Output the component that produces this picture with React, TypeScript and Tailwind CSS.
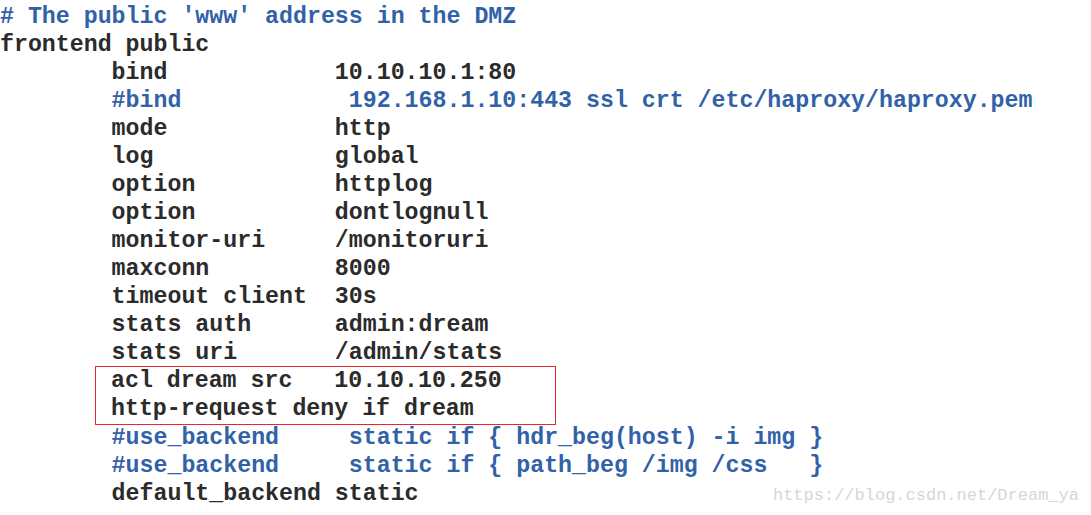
import React from 'react';

const lines: { text: string; tone: 'dark' | 'blue' }[] = [
  { text: "# The public 'www' address in the DMZ", tone: 'blue' },
  { text: 'frontend public', tone: 'dark' },
  { text: '        bind            10.10.10.1:80', tone: 'dark' },
  { text: '        #bind            192.168.1.10:443 ssl crt /etc/haproxy/haproxy.pem', tone: 'blue' },
  { text: '        mode            http', tone: 'dark' },
  { text: '        log             global', tone: 'dark' },
  { text: '        option          httplog', tone: 'dark' },
  { text: '        option          dontlognull', tone: 'dark' },
  { text: '        monitor-uri     /monitoruri', tone: 'dark' },
  { text: '        maxconn         8000', tone: 'dark' },
  { text: '        timeout client  30s', tone: 'dark' },
  { text: '        stats auth      admin:dream', tone: 'dark' },
  { text: '        stats uri       /admin/stats', tone: 'dark' },
];

const tail: { text: string; tone: 'dark' | 'blue' }[] = [
  { text: '        #use_backend     static if { hdr_beg(host) -i img }', tone: 'blue' },
  { text: '        #use_backend     static if { path_beg /img /css   }', tone: 'blue' },
  { text: '        default_backend static', tone: 'dark' },
];

const toneClass = (tone: 'dark' | 'blue') => (tone === 'blue' ? 'text-[#3162a8]' : 'text-[#2b2b2b]');

const Line = ({ text, tone }: { text: string; tone: 'dark' | 'blue' }) => (
  <div className={`whitespace-pre h-[28px] ${toneClass(tone)}`}>{text}</div>
);

export default function App() {
  return (
    <div className="relative w-[1091px] h-[515px] bg-white overflow-hidden">
      <div
        className="pt-[3px] font-bold text-[23.25px] leading-[28px]"
        style={{ fontFamily: '"Liberation Mono", "Courier New", monospace' }}
      >
        {lines.map((l, i) => (
          <Line key={i} {...l} />
        ))}
        {/* highlighted acl block */}
        <div className="ml-[95px] w-[461px] h-[59px] -my-px border border-[#e8262b] pl-[15px]">
          <div className="whitespace-pre h-[28px] text-[#2b2b2b]">{'acl dream src   10.10.10.250'}</div>
          <div className="whitespace-pre h-[28px] text-[#2b2b2b]">{'http-request deny if dream'}</div>
        </div>
        {tail.map((l, i) => (
          <Line key={i} {...l} />
        ))}
      </div>
      <div
        className="absolute right-[12px] bottom-[9px] text-[17px] leading-[20px] text-[#d6d6d6]"
        style={{ fontFamily: '"Liberation Mono", monospace' }}
      >
        https://blog.csdn.net/Dream_ya
      </div>
    </div>
  );
}
